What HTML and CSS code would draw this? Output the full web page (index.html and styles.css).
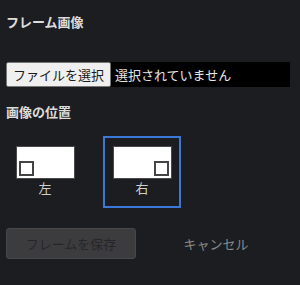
FILE: index.html
```html
<!DOCTYPE html>
<html lang="ja">
<head>
  <meta charset="UTF-8" />
  <meta name="viewport" content="width=device-width, initial-scale=1.0"/>
  <title>フレーム画像</title>
  <link rel="stylesheet" href="styles.css">
</head>
<body>
  <h3 class="section-title first">フレーム画像</h3>
  <div class="file-input">
    <button type="button" class="file-button">ファイルを選択</button>
    <span class="file-name">選択されていません</span>
  </div>

  <h3 class="section-title">画像の位置</h3>
  <div class="positions">
    <div class="position">
      <div class="thumb thumb-left"><span class="marker"></span></div>
      <div class="position-label">左</div>
    </div>
    <div class="position selected">
      <div class="thumb thumb-right"><span class="marker"></span></div>
      <div class="position-label">右</div>
    </div>
  </div>

  <div class="actions">
    <button type="button" class="save" disabled>フレームを保存</button>
    <button type="button" class="cancel">キャンセル</button>
  </div>
</body>
</html>
```

FILE: styles.css
```css
body {
  margin: 0;
  padding: 0 6px;
  background-color: #1c1d21;
  color: #d6d6d6;
  font-family: "Noto Sans CJK JP", "Noto Sans", sans-serif;
  font-size: 13px;
}
.section-title {
  font-size: 13px;
  font-weight: bold;
  line-height: 19px;
  margin: 15px 0;
  color: #dcdcdc;
}
.section-title.first {
  margin-top: 12px;
  margin-bottom: 31px;
}
.file-input {
  display: flex;
  align-items: center;
  width: 284px;
  height: 25px;
  background-color: #000;
}
.file-button {
  height: 25px;
  width: 105px;
  padding: 0;
  font-family: inherit;
  font-size: 13px;
  color: #1a1a1a;
  background-color: #efefef;
  border: 1px solid #767676;
  border-radius: 2px;
}
.file-name {
  margin-left: 4px;
  color: #e6e6e6;
}
.positions {
  display: flex;
  gap: 19px;
}
.position {
  width: 78px;
  box-sizing: border-box;
  border: 2px solid transparent;
  padding: 8px 8px 10px;
  text-align: center;
}
.position.selected {
  border-color: #3b78d8;
}
.thumb {
  box-sizing: border-box;
  width: 59px;
  height: 33px;
  margin: 0 auto;
  padding: 2px;
  background-color: #fff;
  border: 1px solid #4a4a4a;
  display: flex;
  align-items: flex-end;
}
.thumb-right {
  justify-content: flex-end;
}
.marker {
  box-sizing: border-box;
  width: 15px;
  height: 15px;
  border: 2px solid #444;
  background-color: #fff;
}
.position-label {
  margin-top: 1px;
  line-height: 16px;
  color: #cfcfcf;
}
.actions {
  display: flex;
  gap: 15px;
  margin-top: 20px;
}
.actions button {
  width: 130px;
  height: 31px;
  font-family: inherit;
  font-size: 13px;
  border-radius: 3px;
}
.save {
  background-color: #3c3c3f;
  color: #262628;
  border: 1px solid #48484b;
}
.cancel {
  background: none;
  border: none;
  color: #8a8a8a;
  cursor: pointer;
}
```
